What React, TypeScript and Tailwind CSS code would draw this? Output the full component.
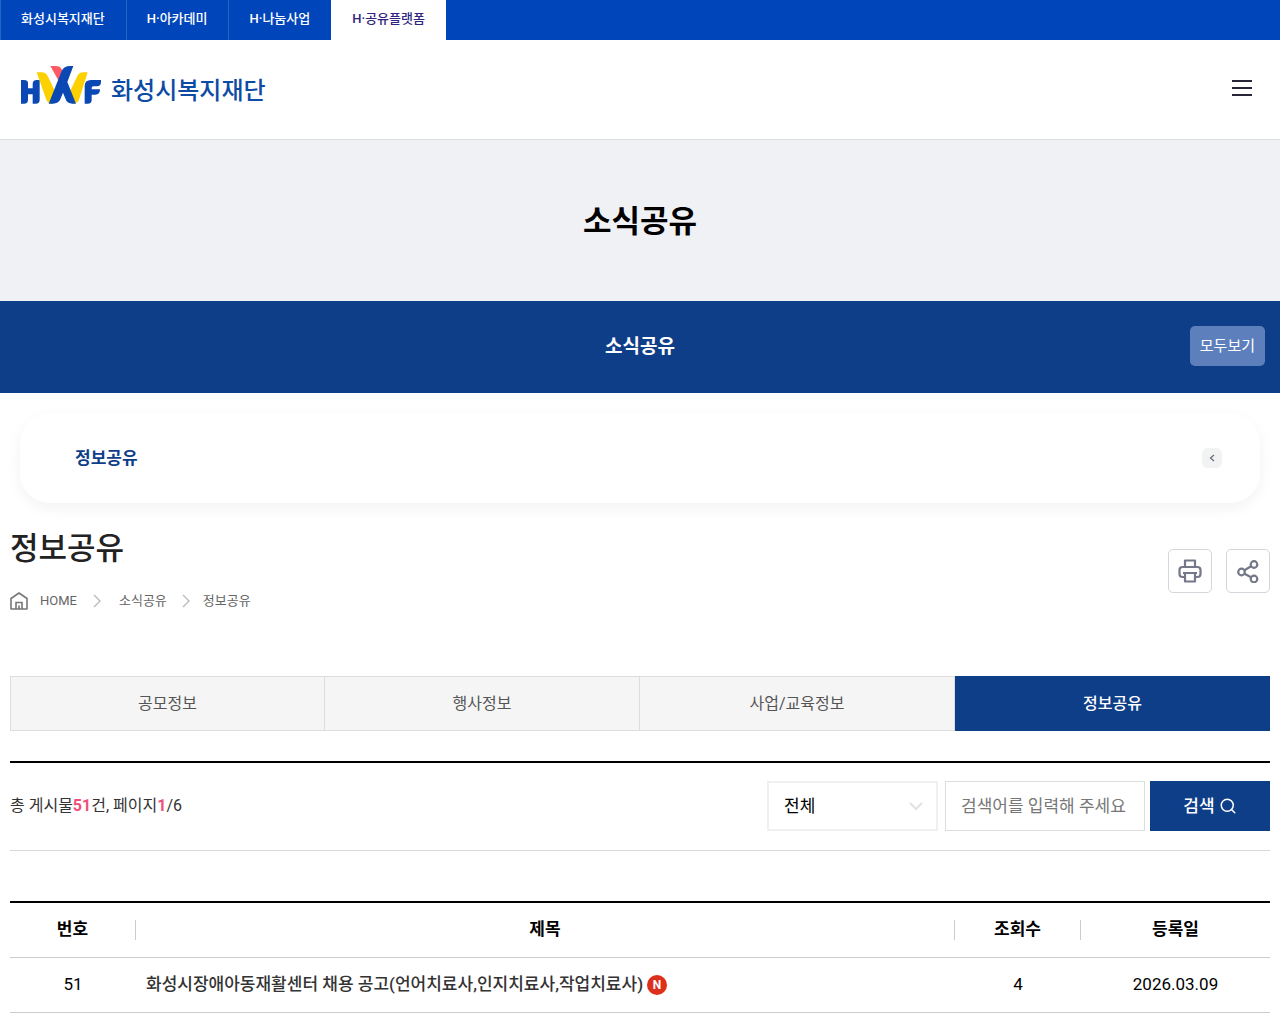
import { useState } from "react";
import { Search } from "lucide-react";

const siteLinks = ["화성시복지재단", "H·아카데미", "H·나눔사업", "H·공유플랫폼"];
const tabs = ["공모정보", "행사정보", "사업/교육정보", "정보공유"];

const posts = [
    {
        no: 51,
        title: "화성시장애아동재활센터 채용 공고(언어치료사,인지치료사,작업치료사)",
        views: 4,
        date: "2026.03.09",
        isNew: true,
    },
];

function Logo() {
    return (
        <a href="#" className="flex items-start gap-[9px]">
            <svg width="82" height="40" viewBox="60 195 246 120" aria-hidden="true">
                <path d="M63 240h9q12 0 12 10v15h14v-13q0-12 12-12h9v59q0 12-12 12h-9v-28H84v16q0 12-12 12h-9z" fill="#0a48b4" />
                <path d="M110 217h13q16 0 21 13l25 52-12 29q-13 0-18-12z" fill="#fdd000" />
                <path d="M263 217h-12q-15 0-20 13l-26 54 12 27q15 0 20-12z" fill="#fdd000" />
                <path d="M151 198h16q15 0 19 12l3 12-11 24z" fill="#ff5a64" />
                <path d="M220 198h-10q-18 0-25 15l-39 98h13q16 0 22-13l8-20 8 20q5 13 20 13h11l-26-65z" fill="#0a48b4" />
                <path d="M254 311v-52q0-19 19-19h30v6q0 13-13 13h-10q-5 0-5 5v4h25q0 16-14 16h-11v15q0 12-12 12z" fill="#0a48b4" />
            </svg>
            <span className="pt-[10px] text-[24px] leading-8 font-medium text-[#0d4ba5]">화성시복지재단</span>
        </a>
    );
}

function HomeIcon() {
    return (
        <svg width="18" height="18" viewBox="0 0 18 18" fill="none" stroke="#777" strokeWidth="1.6" aria-hidden="true">
            <path d="M1 6.500 9 1l8 5.500V17H1z" strokeLinejoin="round" />
            <path d="M6 17v-6.500h6V17M9 13.500V17" />
        </svg>
    );
}

function Chevron() {
    return (
        <svg width="8" height="14" viewBox="0 0 8 14" fill="none" stroke="#bbb" strokeWidth="1.4" aria-hidden="true">
            <path d="m1 1 6 6-6 6" />
        </svg>
    );
}

function PrintIcon() {
    return (
        <svg width="24" height="24" viewBox="0 0 24 24" fill="none" stroke="#747887" strokeWidth="2.200" strokeLinejoin="round" aria-hidden="true">
            <path d="M7 8V1.500h10V8" />
            <path d="M7 18H4.500Q1.500 18 1.500 15v-4Q1.500 8 4.500 8h15q3 0 3 3v4q0 3-3 3H17" />
            <path d="M5 14h14M7 14v8.500h10V14" />
        </svg>
    );
}

function ShareIcon() {
    return (
        <svg width="22" height="24" viewBox="0 0 22 24" fill="none" stroke="#747887" strokeWidth="2.200" aria-hidden="true">
            <circle cx="4.500" cy="13" r="3.300" />
            <circle cx="17" cy="5.500" r="3.300" />
            <circle cx="17" cy="20" r="3.300" />
            <path d="m7.500 11.300 6.500-4M7.500 14.700l6.500 3.600" />
        </svg>
    );
}

function App() {
    const [activeTab, setActiveTab] = useState("정보공유");
    const [keyword, setKeyword] = useState("");

    return (
        <div className="min-h-screen bg-white font-[Roboto,'Noto_Sans_CJK_KR',sans-serif] text-[#222]">
            <nav className="flex h-10 bg-[#0046ba] text-[13px] leading-5 font-medium text-white">
                {siteLinks.map((name, i) => (
                    <a
                        key={name}
                        href="#"
                        className={`border-l pt-[9px] pr-[21px] pl-5 ${
                            i === siteLinks.length - 1
                                ? "border-white bg-white text-[#30257e]"
                                : "border-[#2665c8]"
                        }`}
                    >
                        {name}
                    </a>
                ))}
            </nav>

            <header className="flex h-25 items-center justify-between border-b border-[#ddd] pr-7 pl-5">
                <div className="pb-2">
                    <Logo />
                </div>
                <button type="button" aria-label="메뉴" className="flex flex-col gap-[5px] pb-1">
                    <span className="h-0.5 w-5 bg-[#28243a]" />
                    <span className="h-0.5 w-5 bg-[#28243a]" />
                    <span className="h-0.5 w-5 bg-[#28243a]" />
                </button>
            </header>

            <div className="flex h-[161px] items-center justify-center bg-[#f0f1f5] pt-0.5">
                <p className="text-[31px] leading-10 font-bold text-black">소식공유</p>
            </div>

            <div className="grid h-[92px] grid-cols-3 items-center bg-[#0f3e89] px-[15px] pb-0.5 text-white">
                <p className="col-start-2 pt-0.5 text-center text-[19px] leading-6 font-bold">소식공유</p>
                <button type="button" className="h-10 justify-self-end rounded-[5px] bg-[#5d7fbc] px-[10px] text-[15px] leading-5">
                    모두보기
                </button>
            </div>

            <div className="mx-5 mt-5 flex h-[90px] items-center justify-between rounded-[30px] bg-white pr-[38px] pl-[55px] shadow-[0_5px_15px_rgba(0,0,0,0.05)]">
                <a href="#" className="text-[17px] leading-6 font-bold text-[#0f3e89]">정보공유</a>
                <button type="button" aria-label="이전" className="flex size-5 items-center justify-center rounded-md bg-[#f0f3f2]">
                    <svg width="6" height="8" viewBox="0 0 6 8" fill="none" stroke="#667" strokeWidth="1.2" aria-hidden="true">
                        <path d="M5 1 1.500 4 5 7" />
                    </svg>
                </button>
            </div>

            <main className="px-[10px] pt-6">
                <div className="flex items-start justify-between">
                    <div>
                        <h1 className="text-[31px] leading-11 font-medium">정보공유</h1>
                        <ol className="mt-5 flex h-5 items-center text-[13px] leading-5 text-[#666]">
                            <li className="flex items-center gap-3">
                                <HomeIcon />
                                <a href="#">HOME</a>
                            </li>
                            <li className="ml-4 flex items-center gap-[18px]">
                                <Chevron />
                                <a href="#">소식공유</a>
                            </li>
                            <li className="ml-[15px] flex items-center gap-[13px]">
                                <Chevron />
                                <a href="#">정보공유</a>
                            </li>
                        </ol>
                    </div>
                    <div className="flex gap-[14px] pt-[22px]">
                        <button type="button" aria-label="인쇄" className="flex size-11 items-center justify-center rounded-[5px] border border-[#d5d6dc]">
                            <PrintIcon />
                        </button>
                        <button type="button" aria-label="공유" className="flex size-11 items-center justify-center rounded-[5px] border border-[#d5d6dc]">
                            <ShareIcon />
                        </button>
                    </div>
                </div>

                <div role="tablist" className="mt-[65px] grid h-[55px] grid-cols-4 text-[16px] leading-6">
                    {tabs.map((tab) => (
                        <button
                            key={tab}
                            type="button"
                            role="tab"
                            aria-selected={tab === activeTab}
                            onClick={() => setActiveTab(tab)}
                            className={
                                tab === activeTab
                                    ? "bg-[#0f3e89] font-medium text-white"
                                    : "border-y border-r border-[#ddd] bg-[#f5f5f5] text-[#555] first:border-l"
                            }
                        >
                            {tab}
                        </button>
                    ))}
                </div>

                <div className="mt-[30px] flex h-[90px] items-center justify-between border-t-2 border-b border-t-black border-b-[#d8d8d8] pb-0.5">
                    <p className="text-[16px] leading-6 text-[#333]">
                        총 게시물<strong className="text-[#ee5079]">51</strong>건, 페이지<strong className="text-[#ee5079]">1</strong>/6
                    </p>
                    <form className="flex h-[50px] text-[17px] leading-6" onSubmit={(e) => e.preventDefault()}>
                        <div className="relative mr-[7px]">
                            <select aria-label="검색 구분" className="h-full w-[171px] appearance-none border-2 border-[#f0f0f0] bg-white px-[15px] text-black">
                                <option>전체</option>
                            </select>
                            <svg className="pointer-events-none absolute top-[21px] right-[15px]" width="14" height="9" viewBox="0 0 14 9" fill="none" stroke="#e2e2e2" strokeWidth="2" aria-hidden="true">
                                <path d="m1 1 6 6 6-6" />
                            </svg>
                        </div>
                        <input
                            type="text"
                            aria-label="검색어"
                            placeholder="검색어를 입력해 주세요"
                            value={keyword}
                            onChange={(e) => setKeyword(e.target.value)}
                            className="mr-[5px] w-50 border border-[#ddd] px-[15px] placeholder:text-[#777]"
                        />
                        <button type="submit" className="flex w-30 items-center justify-center gap-1 bg-[#0f3e89] font-medium text-white">
                            검색
                            <Search size={18} strokeWidth={2} />
                        </button>
                    </form>
                </div>

                <table className="mt-[50px] w-full table-fixed border-t-2 border-black text-[17px] leading-6 text-black">
                    <colgroup>
                        <col className="w-[10%]" />
                        <col className="w-[65%]" />
                        <col className="w-[10%]" />
                        <col className="w-[15%]" />
                    </colgroup>
                    <thead>
                        <tr className="h-[55px] border-b border-[#ccc]">
                            {["번호", "제목", "조회수", "등록일"].map((label, i) => (
                                <th key={label} scope="col" className="p-0 font-bold">
                                    <div className={`flex h-5 items-center justify-center pb-0.5 ${i < 3 ? "border-r border-[#ccc]" : ""}`}>
                                        {label}
                                    </div>
                                </th>
                            ))}
                        </tr>
                    </thead>
                    <tbody>
                        {posts.map((post) => (
                            <tr key={post.no} className="h-[55px] border-b border-[#ccc] text-center">
                                <td className="pb-0.5">{post.no}</td>
                                <td className="px-[10px] text-left">
                                    <a href="#" className="flex items-center gap-1 font-medium text-[#333]">
                                        <span className="pb-0.5">{post.title}</span>
                                        {post.isNew && (
                                            <span className="flex size-5 items-center justify-center rounded-full bg-[#dc301c] text-[12px] leading-4 font-bold text-white">
                                                N
                                            </span>
                                        )}
                                    </a>
                                </td>
                                <td className="pb-0.5">{post.views}</td>
                                <td className="pb-0.5">{post.date}</td>
                            </tr>
                        ))}
                    </tbody>
                </table>
            </main>
        </div>
    );
}

export default App;
